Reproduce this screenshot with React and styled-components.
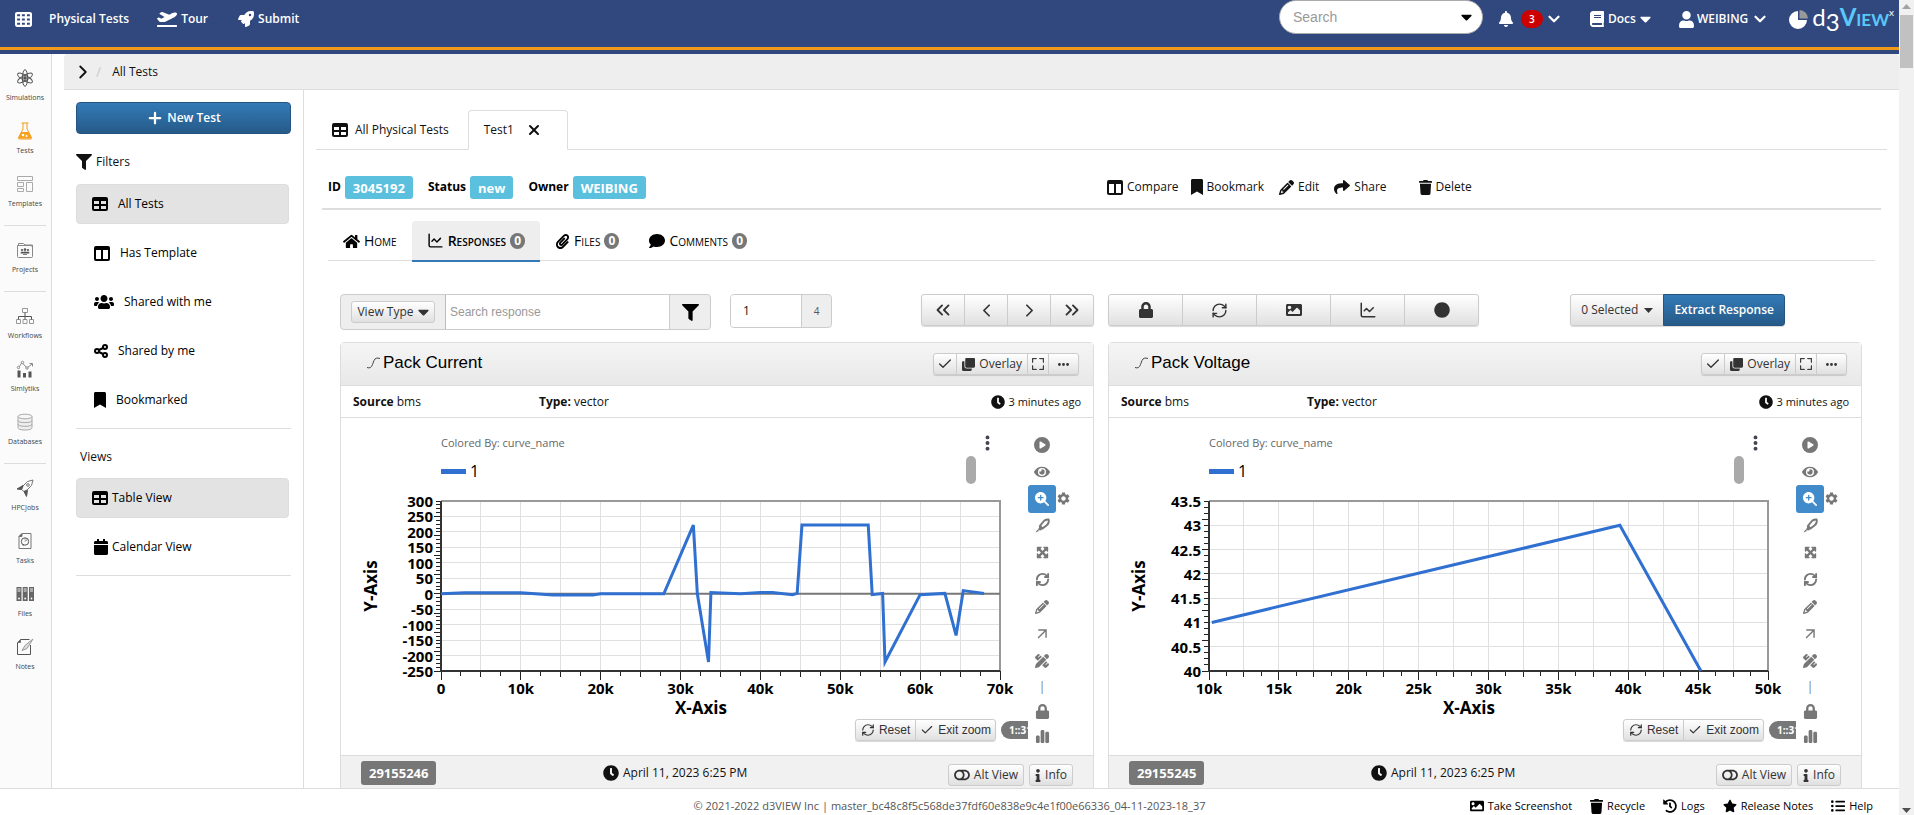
import React, { useState } from 'react';
import styled, { createGlobalStyle, css } from 'styled-components';
import * as FaIcons from 'react-icons/fa';
import * as Fa6Icons from 'react-icons/fa6';
import { MdArrowOutward, MdSettings } from 'react-icons/md';
import { BsFullscreen } from 'react-icons/bs';
import {
    ChevronDown, ChevronLeft, ChevronRight, ChevronsLeft, ChevronsRight,
    ChartLine, Check, RefreshCw, Plus, X
} from 'lucide-react';


const GlobalStyle = createGlobalStyle`
    * {
        box-sizing: border-box;
    }

    body {
        margin: 0;
        background: #fff;
        color: #111;
        font: 12px/18px 'Open Sans', 'Noto Sans', sans-serif;
    }

    button, input {
        font: inherit;
        color: inherit;
    }

    a {
        color: inherit;
        text-decoration: none;
    }

    svg {
        flex: none;
    }
`;

const Page = styled.div`
    display: flex;
    height: 100vh;
    overflow: hidden;
`;

const Screen = styled.div`
    flex: 1;
    min-width: 0;
    display: flex;
    flex-direction: column;
`;

/* ---- scrollbar ---- */

const ScrollTrack = styled.div`
    width: 15px;
    background: #f1f1f1;
    display: flex;
    flex-direction: column;
    align-items: center;
    justify-content: space-between;
    padding: 4px 0 2px;
`;

const ScrollThumb = styled.div`
    width: 13px;
    height: 53px;
    margin-top: 6px;
    background: #c1c1c1;
`;

const ScrollTop = styled.div`
    display: flex;
    flex-direction: column;
    align-items: center;
`;

/* ---- top bar ---- */

const TopBar = styled.header`
    flex: none;
    height: 50px;
    display: flex;
    align-items: flex-start;
    background: #31487e;
    border-bottom: 3px solid #f09a1a;
    color: #fff;
    font-weight: 600;
`;

const TopStrip = styled.div`
    flex: none;
    height: 4px;
    background: #31487e;
`;

const TopLink = styled.a`
    display: flex;
    align-items: center;
    gap: ${({$gap}) => $gap || 4}px;
    height: 38px;
    margin-left: ${({$left}) => $left || 30}px;
`;

const SearchPill = styled.div`
    width: 204px;
    height: 34px;
    margin-left: auto;
    padding: 0 10px 0 13px;
    display: flex;
    align-items: center;
    border: 1px solid #aaa;
    border-radius: 17px;
    background: #fff;
    color: #000;

    input {
        flex: 1;
        min-width: 0;
        padding: 0;
        border: 0;
        outline: 0;
        background: none;
        font: 14px 'Liberation Sans', Arial, sans-serif;
    }

    input::placeholder {
        color: #999;
    }
`;

const AlertCount = styled.span`
    min-width: 22px;
    height: 18px;
    margin-left: 6px;
    border-radius: 9px;
    background: #c00;
    font-size: 10px;
    text-align: center;
`;

const Logo = styled.a`
    display: flex;
    align-items: center;
    gap: 3px;
    height: 38px;
    margin: 0 5px 0 20px;
    font: 24px/38px Lato, sans-serif;
`;

const LogoThree = styled.span`
    vertical-align: -5px;
`;

const LogoView = styled.span`
    color: #5bc8fa;
    font-variant: small-caps;
    font-weight: 700;
`;

const LogoMark = styled.sup`
    font-size: 10px;
    line-height: 10px;
    vertical-align: 10px;
`;

/* ---- body ---- */

const Body = styled.div`
    flex: 1;
    min-height: 0;
    display: flex;
`;

const Rail = styled.nav`
    flex: none;
    width: 52px;
    background: #fbfbfb;
    border-right: 1px solid #ddd;
`;

const RailGroup = styled.div`
    display: flex;
    flex-direction: column;
    gap: 18px;
    margin: 0 5px 0 4px;
    padding: 15px 0;
    border-bottom: 1px solid #ddd;

    &:last-child {
        border-bottom: 0;
    }
`;

const RailLink = styled.a`
    display: flex;
    flex-direction: column;
    align-items: center;
    gap: 5px;
    font-size: 7px;
    line-height: 12px;
    color: #444;
`;

const Content = styled.div`
    flex: 1;
    min-width: 0;
    margin-left: 12px;
    display: flex;
    flex-direction: column;
`;

const Breadcrumb = styled.nav`
    flex: none;
    height: 36px;
    display: flex;
    align-items: center;
    padding-left: 8px;
    background: #eee;
    border-bottom: 1px solid #ddd;
    border-radius: 4px 4px 0 0;
`;

const Slash = styled.span`
    margin: 0 11px 0 2px;
    color: #ccc;
    font-size: 14px;
`;

const Columns = styled.div`
    flex: 1;
    min-height: 0;
    display: flex;
`;

const SidePanel = styled.aside`
    flex: none;
    width: 240px;
    padding: 12px 12px 0;
    border-right: 1px solid #ddd;
`;

const blueButton = css`
    border: 1px solid #245580;
    background: linear-gradient(#337ab7, #265a88);
    color: #fff;
    font-weight: 600;
`;

const greyButton = css`
    border: 1px solid #ccc;
    background: linear-gradient(#fff, #e0e0e0);
    color: #333;
`;

const NewTestButton = styled.button`
    ${blueButton}
    width: 100%;
    height: 32px;
    border-radius: 4px;
    display: flex;
    align-items: center;
    justify-content: center;
    gap: 3px;
`;

const SideTitle = styled.h2`
    display: flex;
    align-items: center;
    gap: 4px;
    margin: ${({$first}) => ($first ? '19px 0 13px' : '19px 4px 12px')};
    font-size: 12px;
    line-height: 18px;
    font-weight: 400;
`;

const SideList = styled.div`
    display: flex;
    flex-direction: column;
    gap: 9px;
    padding-bottom: 8px;
    border-bottom: 1px solid #ddd;
`;

const SideItem = styled.a`
    display: flex;
    align-items: center;
    gap: ${({$gap}) => $gap || 10}px;
    height: 40px;
    margin-right: 2px;
    padding-left: 17px;
    border: 1px solid transparent;
    border-radius: 4px;
    color: #000;

    ${({$active}) => $active && css`
        padding-left: 15px;
        border-color: #ddd;
        background: #e3e3e3;
    `}
`;

/* ---- main area ---- */

const Main = styled.main`
    flex: 1;
    min-width: 0;
    display: flex;
    flex-direction: column;
`;

const PageTabs = styled.div`
    flex: none;
    height: 40px;
    display: flex;
    margin: 20px 12px 0;
    padding-left: 16px;
    border-bottom: 1px solid #ddd;
`;

const PageTab = styled.a`
    display: flex;
    align-items: center;
    gap: 7px;
    padding-right: 19px;

    ${({$active}) => $active && css`
        gap: 12px;
        height: 40px;
        padding: 0 25px 0 15px;
        background: #fff;
        border: 1px solid #ddd;
        border-bottom-color: #fff;
        border-radius: 4px 4px 0 0;
    `}
`;

const halves = css`
    display: grid;
    grid-template-columns: minmax(0, 1fr) minmax(0, 1fr);
    column-gap: 14px;
`;

const TestInfo = styled.div`
    ${halves}
    flex: none;
    height: 60px;
    align-items: center;
    margin: 0 18px;
    padding: 16px 19px 0 6px;
    border-bottom: 2px solid #ddd;
`;

const InfoRow = styled.div`
    display: flex;
    align-items: center;
    padding-left: ${({$left}) => $left || 0}px;
`;

const InfoLabel = styled.span`
    margin-right: 4px;
    font-weight: 700;
    color: #000;
`;

const InfoBadge = styled.span`
    height: 23px;
    margin-right: 15px;
    padding: 0 8px;
    border-radius: 3px;
    background: #5bc0de;
    color: #fff;
    font-size: 13px;
    line-height: 24px;
    font-weight: 700;
`;

const ActionButton = styled.button`
    display: flex;
    align-items: center;
    gap: 4px;
    margin-right: ${({$right}) => $right || 15}px;
    padding: 0;
    border: 0;
    background: none;
`;

const SubTabs = styled.div`
    flex: none;
    height: 51px;
    display: flex;
    align-items: flex-end;
    margin: 0 24px;
    border-bottom: 1px solid #ddd;
`;

const SubTab = styled.a`
    display: flex;
    align-items: center;
    gap: 4px;
    height: 38px;
    padding: 0 15px;
    font-size: 14px;
    font-variant: small-caps;
    color: #000;

    ${({$active}) => $active && css`
        height: 41px;
        margin-bottom: -2px;
        border-bottom: 2px solid #337ab7;
        border-radius: 4px 4px 0 0;
        background: #eee;
        font-weight: 600;
    `}
`;

const Count = styled.span`
    min-width: 15px;
    height: 16px;
    border-radius: 8px;
    background: #777;
    color: #fff;
    font-size: 12px;
    line-height: 16px;
    font-weight: 700;
    text-align: center;
`;

const Toolbar = styled.div`
    ${halves}
    flex: none;
    margin: 33px 37px 12px 36px;
`;

const ToolSide = styled.div`
    display: flex;
    align-items: flex-start;
`;

const InputGroup = styled.div`
    display: flex;
    height: ${({$height}) => $height || 36}px;
    margin-right: 19px;
    border: 1px solid #ccc;
    border-radius: 4px;
    background: #eee;
    overflow: hidden;

    input {
        width: ${({$inputWidth}) => $inputWidth}px;
        padding: 0 ${({$pad}) => $pad || 4}px;
        border: 0;
        border-right: 1px solid #ccc;
        border-left: ${({$pad}) => ($pad ? 0 : '1px solid #bbb')};
        outline: 0;
        background: #fff;
    }

    input::placeholder {
        color: #999;
        font-family: 'Liberation Sans', Arial, sans-serif;
    }
`;

const Addon = styled.div`
    display: flex;
    align-items: center;
    justify-content: center;
    width: ${({$width}) => $width}px;
    font-size: ${({$small}) => ($small ? 10 : 12)}px;
    color: #555;
`;

const ButtonGroup = styled.div`
    display: flex;
    margin-left: ${({$push}) => ($push ? 'auto' : 0)};
    margin-right: ${({$right}) => $right || 0}px;
    border-radius: 3px;
    box-shadow: 0 1px 1px rgba(0, 0, 0, 0.15);

    > button {
        border-radius: 0;
    }

    > button + button {
        margin-left: -1px;
    }

    > button:first-child {
        border-top-left-radius: 3px;
        border-bottom-left-radius: 3px;
    }

    > button:last-child {
        border-top-right-radius: 3px;
        border-bottom-right-radius: 3px;
    }
`;

const ToolButton = styled.button`
    ${greyButton}
    display: flex;
    align-items: center;
    justify-content: center;
    gap: 6px;
    width: ${({$width}) => ($width ? `${$width}px` : 'auto')};
    height: 32px;
    padding: 0 10px;
`;

const ExtractButton = styled(ToolButton)`
    ${blueButton}
`;

const SmallButton = styled.button`
    ${greyButton}
    display: flex;
    align-items: center;
    gap: 4px;
    height: 22px;
    padding: 0 ${({$pad}) => $pad || 5}px;
    border-radius: 3px;
    font-family: ${({$arial}) => ($arial ? "'Liberation Sans', Arial, sans-serif" : 'inherit')};
    white-space: nowrap;
`;

/* ---- response cards ---- */

const Cards = styled.div`
    ${halves}
    flex: 1;
    min-height: 0;
    overflow: hidden;
    margin: 0 37px 0 36px;
`;

const Card = styled.section`
    border: 1px solid #ddd;
    border-radius: 4px 4px 0 0;
    height: max-content;
`;

const CardHead = styled.div`
    height: 43px;
    display: flex;
    align-items: center;
    justify-content: space-between;
    padding: 0 14px 0 26px;
    border-bottom: 1px solid #ddd;
    background: linear-gradient(#f5f5f5, #e8e8e8);
`;

const CardTitle = styled.h3`
    display: flex;
    align-items: center;
    gap: 3px;
    margin: 0 0 3px;
    font: 17px/20px 'Liberation Sans', Arial, sans-serif;
    color: #000;
`;

const CardMeta = styled.div`
    height: 32px;
    display: grid;
    grid-template-columns: 186px 1fr auto;
    align-items: center;
    padding: 0 12px;
    border-bottom: 1px solid #ddd;
`;

const IconText = styled.span`
    display: flex;
    align-items: center;
    gap: 4px;
    font-size: ${({$small}) => ($small ? 11 : 12)}px;
`;

const CardBody = styled.div`
    display: flex;
`;

const ChartArea = styled.div`
    flex: 1;
    min-width: 0;
    padding-bottom: 14px;
`;

const ChartTop = styled.div`
    display: flex;
    justify-content: space-between;
    height: 72px;
    padding: 16px 38px 0 100px;
`;

const Legend = styled.div`
    font-size: 11px;
    color: #666;
`;

const LegendKey = styled.div`
    display: flex;
    align-items: center;
    gap: 4px;
    margin-top: 9px;
    font-size: 16px;
    line-height: 20px;
    color: #000;

    i {
        width: 25px;
        height: 5px;
        background: #3070d0;
    }
`;

const LegendScroll = styled.div`
    display: flex;
    align-items: flex-start;
    gap: 9px;

    i {
        width: 10px;
        height: 28px;
        margin-top: 22px;
        border-radius: 5px;
        background: #aaa;
    }
`;

const ChartSvg = styled.svg`
    display: block;
    width: 100%;
    height: auto;
    font-family: 'Open Sans', 'Noto Sans', sans-serif;
    font-size: 15px;
    font-weight: 700;
`;

const AxisTitle = styled.text`
    font-size: 17px;
`;

const ZoomRow = styled.div`
    display: flex;
    align-items: center;
    justify-content: flex-end;
    gap: 5px;
`;

const RangeClip = styled.div`
    width: 27px;
    overflow: hidden;
`;

const RangePill = styled.div`
    width: 54px;
    height: 18px;
    padding-left: 8px;
    border-radius: 9px;
    background: #777;
    color: #fff;
    font-size: 10px;
    font-weight: 700;
`;

const ChartTools = styled.div`
    flex: none;
    width: 65px;
    display: flex;
    flex-direction: column;
    padding-top: 13px;
    color: #777;
`;

const ToolLine = styled.div`
    display: flex;
    align-items: center;
    height: ${({$tight}) => ($tight ? 25 : 27)}px;
`;

const ChartTool = styled.button`
    display: flex;
    align-items: center;
    justify-content: center;
    width: 28px;
    height: ${({$active}) => ($active ? 28 : 25)}px;
    padding: 0;
    border: 0;
    border-radius: 3px;
    background: ${({$active}) => ($active ? '#428bca' : 'none')};
    color: ${({$active}) => ($active ? '#fff' : '#777')};
`;

const CardFoot = styled.div`
    height: 40px;
    display: grid;
    grid-template-columns: 242px 1fr auto;
    align-items: start;
    padding: 5px 20px 0;
    border-top: 1px solid #ddd;
    background: #f1f1f1;
`;

const IdBadge = styled(InfoBadge)`
    height: 24px;
    justify-self: start;
    background: #777;
`;

const FootButtons = styled.div`
    display: flex;
    gap: 5px;
    margin-top: 3px;
`;

const FootDate = styled(IconText)`
    height: 24px;
`;

const Footer = styled.footer`
    flex: none;
    height: 27px;
    display: grid;
    grid-template-columns: 1fr auto 1fr;
    align-items: center;
    padding-top: 8px;
    border-top: 1px solid #ddd;
    font-size: 11px;
    color: #555;
`;

const FooterLinks = styled.div`
    display: flex;
    justify-content: flex-end;
    gap: 18px;
    padding-right: 26px;
    color: #000;
`;


/* ---- icons that are not square ---- */

const sized = (Icon, width, height) => styled(Icon)`
    width: ${width}px;
    height: ${height}px;
`;

const PlaneIcon = sized(FaIcons.FaPlaneDeparture, 20, 16);
const BellIcon = sized(FaIcons.FaBell, 14, 16);
const BookIcon = sized(FaIcons.FaBook, 14, 16);
const UserIcon = sized(FaIcons.FaUser, 15, 17);
const UsersIcon = sized(FaIcons.FaUsers, 20, 16);
const CaretIcon = sized(FaIcons.FaCaretDown, 11, 18);
const BookmarkIcon = sized(FaIcons.FaBookmark, 12, 16);
const CalendarIcon = sized(FaIcons.FaCalendar, 14, 16);
const TrashIcon = sized(FaIcons.FaTrash, 13, 15);
const InfoIcon = sized(FaIcons.FaInfo, 6, 13);
const ToggleIcon = sized(FaIcons.FaToggleOff, 16, 14);
const DotsIcon = sized(Fa6Icons.FaEllipsisVertical, 5, 18);

/* ---- drawn icons ---- */

const RailSvg = ({ children, color = '#777' }) => (
    <svg width="18" height="18" viewBox="0 0 18 18" fill="none" stroke={color} strokeWidth="1">
        {children}
    </svg>
);

const AtomIcon = () => (
    <RailSvg color="#555">
        <ellipse cx="9" cy="9" rx="2.6" ry="8.3" />
        <ellipse cx="9" cy="9" rx="2.6" ry="8.3" transform="rotate(60 9 9)" />
        <ellipse cx="9" cy="9" rx="2.6" ry="8.3" transform="rotate(120 9 9)" />
        <circle cx="9" cy="9" r="1.3" fill="#555" />
    </RailSvg>
);

const FlaskIcon = () => (
    <RailSvg color="#f59a1c">
        <path d="M5.5 1h7M7 1v6L2.5 15.5q-.5 1.5 1 1.5h11q1.5 0 1-1.5L11 7V1" />
        <path d="M5.5 10.5h7l2.5 5.5H3z" fill="#f9a51a" />
        <circle cx="7" cy="13" r="1.2" fill="#fff" stroke="none" />
        <circle cx="10.5" cy="14" r="1" fill="#fff" stroke="none" />
    </RailSvg>
);

const TemplateIcon = () => (
    <RailSvg color="#aaa">
        <path d="M1.5 1.5h15v4h-15zM1.5 7.5h6v4h-6zM1.5 13.5h6v3h-6zM10.5 7.5h6v9h-6z" />
    </RailSvg>
);

const ProjectIcon = () => (
    <RailSvg color="#888">
        <path d="M2.5 4V2.5h5L9 4h7.5v3M1.5 4.5h14l1 2v9q0 1-1 1h-13q-1 0-1-1z" />
        <g fill="#555" stroke="none">
            <circle cx="6" cy="9" r="1.1" /><circle cx="9" cy="8.6" r="1.3" /><circle cx="12" cy="9" r="1.1" />
            <path d="M4.5 12.5q0-2 1.5-2 1 0 1 .6.5-.6 2-.6t2 .6q0-.6 1-.6 1.5 0 1.5 2zM7 13h4v.8H7z" />
        </g>
    </RailSvg>
);

const WorkflowIcon = () => (
    <RailSvg color="#999">
        <path d="M6.5 1.5h5v4h-5zM.5 12.5h4v4h-4zM7 12.5h4v4H7zM13.5 12.5h4v4h-4z" />
        <path d="M9 5.5v7M2.5 12.5v-3h13v3" stroke="#555" />
    </RailSvg>
);

const SimlytiksIcon = () => (
    <RailSvg color="#888">
        <path d="M3 7l3-4.5L11 8l5-4M13.5 3.5h3v3" />
        <circle cx="2.5" cy="7.5" r="1.2" fill="#fff" /><circle cx="6.5" cy="2.5" r="1.2" fill="#fff" />
        <circle cx="11" cy="8" r="1.2" fill="#fff" />
        <path d="M1.5 10.5h3v7h-3zM7 13h3v4.5H7zM12.5 11.5h3v6h-3z" fill="#555" stroke="none" />
    </RailSvg>
);

const DatabaseIcon = () => (
    <RailSvg color="#aaa">
        <path d="M2 3.5v11q0 2.5 7 2.5t7-2.5v-11z" fill="#eee" />
        <ellipse cx="9" cy="3.5" rx="7" ry="2.3" fill="#f6f6f6" />
        <path d="M2 7.3q0 2.3 7 2.3t7-2.3M2 11q0 2.3 7 2.3T16 11" />
    </RailSvg>
);

const JobsIcon = () => (
    <RailSvg>
        <path d="M17 1q-6 0-10 6l-1.5 3.5L8 12.5l3-1.5q6-4 6-10z" />
        <circle cx="12" cy="6" r="1.3" />
        <path d="M7 6.5L1 10l4.5.5zM11.5 11.5L10.5 17.5 8 12.5z" fill="#555" stroke="#555" />
    </RailSvg>
);

const TaskIcon = () => (
    <RailSvg>
        <path d="M6 1.5h9v15H3v-12z" /><path d="M3 4.5L6 1.5v3z" fill="#555" />
        <circle cx="9" cy="9.5" r="3.7" stroke="#555" />
        <path d="M9 9.5l2-2M9 6.5v1M6.5 13h1.5" stroke="#555" />
    </RailSvg>
);

const BinderIcon = () => (
    <RailSvg>
        <path d="M.5 2h5v14h-5zM6.7 2h5v14h-5zM13 2h5v14h-5z" fill="#666" stroke="none" />
        <path d="M1.5 4h3M1.5 6h3M7.7 4h3M7.7 6h3M14 4h3M14 6h3" stroke="#eee" />
        <g fill="#fff" stroke="none">
            <circle cx="3" cy="13.5" r=".9" /><circle cx="9.2" cy="13.5" r=".9" /><circle cx="15.5" cy="13.5" r=".9" />
        </g>
    </RailSvg>
);

const NoteIcon = () => (
    <RailSvg>
        <path d="M14.5 7v9.5h-13v-12l3-3h9" stroke="#555" /><path d="M1.5 4.5l3-3v3z" fill="#555" />
        <path d="M17 1L9 7.5 6 12.5l5-2z" fill="#ddd" stroke="#999" />
    </RailSvg>
);

const PieIcon = () => (
    <svg width="20" height="20" viewBox="0 0 20 20">
        <path d="M9 2v9h9A9 9 0 1 1 9 2z" fill="#fff" />
        <path d="M10.5 1A9 9 0 0 1 19 9.5h-8.5z" fill="#999" />
    </svg>
);

const CurveIcon = () => (
    <svg width="13" height="12" viewBox="0 0 13 12" fill="none" stroke="#444">
        <path d="M0 10.5q4 1.5 5.5-3L7 3.5Q8.5 0 13 1.5" />
    </svg>
);

const SplitIcon = () => (
    <svg width="16" height="15" viewBox="0 0 16 15" fill="none" stroke="currentColor">
        <rect x="1" y="1" width="14" height="13" rx="1" strokeWidth="2" />
        <path d="M1 2.5h14" strokeWidth="3" /><path d="M8 2v12" strokeWidth="2" />
    </svg>
);

const GridIcon = () => (
    <svg width="16" height="14" viewBox="0 0 16 14" fill="none" stroke="currentColor" strokeWidth="2">
        <rect x="1" y="1" width="14" height="12" rx="1" />
        <path d="M1 2.5h14" strokeWidth="3" /><path d="M8 2v11M1 8h14" />
    </svg>
);

const ShareIcon = () => (
    <svg width="14" height="14" viewBox="0 0 14 14" fill="none" stroke="currentColor" strokeWidth="2">
        <circle cx="3" cy="7" r="2" /><circle cx="11" cy="3" r="2" /><circle cx="11" cy="11" r="2" />
        <path d="M5 6l4-2M5 8l4 2" />
    </svg>
);

const MarkerIcon = () => (
    <svg width="15" height="15" viewBox="0 0 15 15" fill="none" stroke="currentColor" strokeWidth="2">
        <path d="M13.5 1.5q-3-.5-5 2L5 8l2.5 2.5L12 7q2.5-2.5 1.5-5.5z" />
        <path d="M4.5 8l3 3-2 1.5-2.5-.5zM.5 14.5l2-3L4 13z" fill="currentColor" stroke="none" />
    </svg>
);

const Triangle = ({ up, color = '#505050' }) => (
    <svg width="9" height="5" viewBox="0 0 9 5" fill={color}>
        <path d={up ? 'M0 5L4.5 0 9 5z' : 'M0 0L4.5 5 9 0z'} />
    </svg>
);


/* ---- data ---- */

const RailData = [
    [['Simulations', AtomIcon], ['Tests', FlaskIcon], ['Templates', TemplateIcon]],
    [['Projects', ProjectIcon]],
    [['Workflows', WorkflowIcon], ['Simlytiks', SimlytiksIcon], ['Databases', DatabaseIcon]],
    [['HPCJobs', JobsIcon], ['Tasks', TaskIcon], ['Files', BinderIcon], ['Notes', NoteIcon]],
];

const FilterData = [
    { title: 'All Tests', icon: <GridIcon /> },
    { title: 'Has Template', icon: <SplitIcon /> },
    { title: 'Shared with me', icon: <UsersIcon /> },
    { title: 'Shared by me', icon: <ShareIcon /> },
    { title: 'Bookmarked', icon: <BookmarkIcon /> },
];

const ResponseData = [
    {
        id: '29155246',
        title: 'Pack Current',
        x: { min: 0, max: 70, label: 10, grid: 5, tick: 2.5, mid: 5 },
        y: { min: -250, max: 300, label: 50, tick: 12.5 },
        zero: true,
        points: [
            [0, 0], [3, 3], [10, 3], [14, -4], [19, -4], [20, 0], [27.9, 0], [31.6, 222], [32.1, 0],
            [33.5, -221], [33.8, 4], [37.5, 0], [40, 4], [41.5, 4], [44, -3], [44.6, 1], [45.2, 222],
            [53.5, 222], [54, -3], [55.3, 1], [55.6, -221], [60, -3], [63.1, 1], [64.5, -135],
            [65.4, 10], [68, 1],
        ],
    },
    {
        id: '29155245',
        title: 'Pack Voltage',
        x: { min: 10, max: 50, label: 5, grid: 2.5, tick: 1.25, mid: 2.5 },
        y: { min: 40, max: 43.5, label: 0.5, tick: 0.125 },
        points: [[10.2, 41], [39.4, 43], [45.2, 40]],
    },
];

const ToolData = [
    <Fa6Icons.FaCirclePlay size={16} />,
    <FaIcons.FaEye size={16} />,
    <Fa6Icons.FaMagnifyingGlassPlus size={14} />,
    <MarkerIcon />,
    <Fa6Icons.FaMaximize size={13} />,
    <RefreshCw size={15} strokeWidth={3} />,
    <Fa6Icons.FaPencil size={14} />,
    <MdArrowOutward size={17} />,
    <Fa6Icons.FaPenRuler size={14} />,
    '|',
    <FaIcons.FaLock size={15} />,
    <Fa6Icons.FaChartSimple size={15} />,
];

const steps = (min, max, step) => {
    const list = [];
    for (let i = 0; min + i * step <= max + step / 1000; i++) {
        list.push(min + i * step);
    }
    return list;
};

const LEFT = 100;
const RIGHT = 659;
const TOP = 11;
const BOTTOM = 181;

function Chart({ x, y, zero, points, title }) {
    const px = (v) => LEFT + ((v - x.min) / (x.max - x.min)) * (RIGHT - LEFT);
    const py = (v) => BOTTOM - ((v - y.min) / (y.max - y.min)) * (BOTTOM - TOP);
    const tickLength = (v) => {
        if (v % x.label === 0) return 9;
        return v % x.mid === 0 ? 6 : 5;
    };

    return (
        <ChartSvg viewBox="0 0 687 229" role="img" aria-label={title}>
            <g stroke="#e0e0e0" shapeRendering="crispEdges">
                {steps(x.min, x.max, x.grid).map((v) => <line key={v} x1={px(v)} x2={px(v)} y1={TOP} y2={BOTTOM} />)}
                {steps(y.min, y.max, y.label).map((v) => <line key={v} x1={LEFT} x2={RIGHT} y1={py(v)} y2={py(v)} />)}
            </g>
            <path d={`M${LEFT} ${TOP}H${RIGHT}V${BOTTOM}`} fill="none" stroke="#999" strokeWidth="2" />
            {zero && <path d={`M${LEFT} ${py(0)}H${RIGHT}`} stroke="#777" strokeWidth="2" />}
            <g stroke="#222" shapeRendering="crispEdges">
                {steps(x.min, x.max, x.tick).map((v) => (
                    <line key={v} x1={px(v)} x2={px(v)} y1={BOTTOM} y2={BOTTOM + tickLength(v)} />
                ))}
                {steps(y.min, y.max, y.tick).map((v, i) => (
                    <line key={v} x1={i % 5 === 0 ? LEFT - 7 : LEFT - 5} x2={LEFT} y1={py(v)} y2={py(v)} />
                ))}
            </g>
            <path d={`M${LEFT} ${TOP}V${BOTTOM}H${RIGHT}`} fill="none" stroke="#333" strokeWidth="2" />
            <polyline
                points={points.map(([a, b]) => `${px(a)},${py(b)}`).join(' ')}
                fill="none"
                stroke="#3070d0"
                strokeWidth="3"
            />
            {steps(x.min, x.max, x.label).map((v) => (
                <text key={v} x={px(v)} y="204" textAnchor="middle">{v === 0 ? '0' : `${v}k`}</text>
            ))}
            {steps(y.min, y.max, y.label).map((v) => (
                <text key={v} x={LEFT - 8} y={py(v) + 6} textAnchor="end">{v}</text>
            ))}
            <AxisTitle x="360" y="224" textAnchor="middle">X-Axis</AxisTitle>
            <AxisTitle transform="translate(36 96) rotate(-90)" textAnchor="middle">Y-Axis</AxisTitle>
        </ChartSvg>
    );
}

function ResponseCard({ item }) {
    return (
        <Card>
            <CardHead>
                <CardTitle><CurveIcon />{item.title}</CardTitle>
                <ButtonGroup>
                    <SmallButton aria-label="Select" $pad={3}><Check size={16} /></SmallButton>
                    <SmallButton><FaIcons.FaClone size={13} />Overlay</SmallButton>
                    <SmallButton aria-label="Fullscreen" $pad={4}><BsFullscreen size={12} strokeWidth={1} /></SmallButton>
                    <SmallButton aria-label="More" $pad={8}><Fa6Icons.FaEllipsis size={13} /></SmallButton>
                </ButtonGroup>
            </CardHead>
            <CardMeta>
                <span><b>Source</b> bms</span>
                <span><b>Type:</b> vector</span>
                <IconText $small><FaIcons.FaClock size={14} />3 minutes ago</IconText>
            </CardMeta>
            <CardBody>
                <ChartArea>
                    <ChartTop>
                        <Legend>
                            Colored By: curve_name
                            <LegendKey><i />1</LegendKey>
                        </Legend>
                        <LegendScroll>
                            <i />
                            <DotsIcon color="#445" />
                        </LegendScroll>
                    </ChartTop>
                    <Chart {...item} />
                    <ZoomRow>
                        <ButtonGroup>
                            <SmallButton $arial><RefreshCw size={14} />Reset</SmallButton>
                            <SmallButton $arial $pad={4}><Check size={14} />Exit zoom</SmallButton>
                        </ButtonGroup>
                        <RangeClip><RangePill>1::31</RangePill></RangeClip>
                    </ZoomRow>
                </ChartArea>
                <ChartTools>
                    {ToolData.map((icon, index) => (
                        <ToolLine key={index} $tight={index >= 9}>
                            <ChartTool $active={index === 2} aria-label={`Chart tool ${index + 1}`}>{icon}</ChartTool>
                            {index === 2 && <MdSettings size={15} />}
                        </ToolLine>
                    ))}
                </ChartTools>
            </CardBody>
            <CardFoot>
                <IdBadge>{item.id}</IdBadge>
                <FootDate><FaIcons.FaClock size={16} />April 11, 2023 6:25 PM</FootDate>
                <FootButtons>
                    <SmallButton><ToggleIcon />Alt View</SmallButton>
                    <SmallButton><InfoIcon />Info</SmallButton>
                </FootButtons>
            </CardFoot>
        </Card>
    );
}

function App() {
    const [filter, setFilter] = useState('All Tests');
    const [page, setPage] = useState('1');

    return (
        <Page>
            <GlobalStyle />
            <Screen>
                <TopBar>
                    <TopLink href="#apps" $left={15} aria-label="Apps"><Fa6Icons.FaTableCells size={17} /></TopLink>
                    <TopLink href="#tests" $left={17}>Physical Tests</TopLink>
                    <TopLink href="#tour" $left={28}><PlaneIcon />Tour</TopLink>
                    <TopLink href="#submit"><FaIcons.FaRocket size={16} />Submit</TopLink>
                    <SearchPill>
                        <input type="text" placeholder="Search" aria-label="Search" />
                        <CaretIcon />
                    </SearchPill>
                    <TopLink href="#alerts" $left={16} $gap={2}>
                        <BellIcon />
                        <AlertCount>3</AlertCount>
                        <ChevronDown size={18} strokeWidth={3} />
                    </TopLink>
                    <TopLink href="#docs" $left={27}>
                        <BookIcon />Docs<CaretIcon />
                    </TopLink>
                    <TopLink href="#user" $left={28} $gap={3}>
                        <UserIcon />WEIBING<ChevronDown size={18} strokeWidth={3} />
                    </TopLink>
                    <Logo href="#home">
                        <PieIcon />
                        <span>d<LogoThree>3</LogoThree><LogoView>View</LogoView><LogoMark>x</LogoMark></span>
                    </Logo>
                </TopBar>
                <TopStrip />
                <Body>
                    <Rail>
                        {RailData.map((group, index) => (
                            <RailGroup key={index}>
                                {group.map(([name, Icon]) => (
                                    <RailLink href={`#${name}`} key={name}><Icon />{name}</RailLink>
                                ))}
                            </RailGroup>
                        ))}
                    </Rail>
                    <Content>
                        <Breadcrumb>
                            <ChevronRight size={22} />
                            <Slash>/</Slash>
                            All Tests
                        </Breadcrumb>
                        <Columns>
                            <SidePanel>
                                <NewTestButton><Plus size={18} strokeWidth={3} />New Test</NewTestButton>
                                <SideTitle $first><FaIcons.FaFilter size={16} />Filters</SideTitle>
                                <SideList>
                                    {FilterData.map((item) => (
                                        <SideItem
                                            href="#filter"
                                            key={item.title}
                                            $active={item.title === filter}
                                            onClick={() => setFilter(item.title)}
                                        >
                                            {item.icon}
                                            {item.title}
                                        </SideItem>
                                    ))}
                                </SideList>
                                <SideTitle>Views</SideTitle>
                                <SideList>
                                    <SideItem href="#table" $active $gap={4}><GridIcon />Table View</SideItem>
                                    <SideItem href="#calendar" $gap={4}><CalendarIcon />Calendar View</SideItem>
                                </SideList>
                            </SidePanel>
                            <Main>
                                <PageTabs>
                                    <PageTab href="#all"><GridIcon />All Physical Tests</PageTab>
                                    <PageTab href="#test1" $active>Test1<X size={16} strokeWidth={3} /></PageTab>
                                </PageTabs>
                                <TestInfo>
                                    <InfoRow>
                                        <InfoLabel>ID</InfoLabel><InfoBadge>3045192</InfoBadge>
                                        <InfoLabel>Status</InfoLabel><InfoBadge>new</InfoBadge>
                                        <InfoLabel>Owner</InfoLabel><InfoBadge>WEIBING</InfoBadge>
                                    </InfoRow>
                                    <InfoRow $left={5}>
                                        <ActionButton $right={12}><SplitIcon />Compare</ActionButton>
                                        <ActionButton><BookmarkIcon />Bookmark</ActionButton>
                                        <ActionButton><Fa6Icons.FaPencil size={15} />Edit</ActionButton>
                                        <ActionButton $right={32}><FaIcons.FaShare size={16} />Share</ActionButton>
                                        <ActionButton><TrashIcon />Delete</ActionButton>
                                    </InfoRow>
                                </TestInfo>
                                <SubTabs>
                                    <SubTab href="#home"><FaIcons.FaHome size={17} />Home</SubTab>
                                    <SubTab href="#responses" $active>
                                        <ChartLine size={17} />Responses<Count>0</Count>
                                    </SubTab>
                                    <SubTab href="#files"><FaIcons.FaPaperclip size={15} />Files<Count>0</Count></SubTab>
                                    <SubTab href="#comments"><FaIcons.FaComment size={16} />Comments<Count>0</Count></SubTab>
                                </SubTabs>
                                <Toolbar>
                                    <ToolSide>
                                        <InputGroup $inputWidth={225}>
                                            <Addon $width={104}>
                                                <SmallButton>View Type<CaretIcon /></SmallButton>
                                            </Addon>
                                            <input type="text" placeholder="Search response" aria-label="Search response" />
                                            <Addon $width={40}><FaIcons.FaFilter size={17} color="#000" /></Addon>
                                        </InputGroup>
                                        <InputGroup $inputWidth={71} $height={34} $pad={12}>
                                            <input
                                                type="text"
                                                aria-label="Page"
                                                value={page}
                                                onChange={(e) => setPage(e.target.value)}
                                            />
                                            <Addon $width={29} $small>4</Addon>
                                        </InputGroup>
                                        <ButtonGroup $push>
                                            <ToolButton $width={44} aria-label="First"><ChevronsLeft size={22} /></ToolButton>
                                            <ToolButton $width={44} aria-label="Previous"><ChevronLeft size={21} /></ToolButton>
                                            <ToolButton $width={44} aria-label="Next"><ChevronRight size={21} /></ToolButton>
                                            <ToolButton $width={44} aria-label="Last"><ChevronsRight size={22} /></ToolButton>
                                        </ButtonGroup>
                                    </ToolSide>
                                    <ToolSide>
                                        <ButtonGroup>
                                            <ToolButton $width={75} aria-label="Lock"><FaIcons.FaLock size={16} /></ToolButton>
                                            <ToolButton $width={75} aria-label="Refresh"><RefreshCw size={17} /></ToolButton>
                                            <ToolButton $width={75} aria-label="Image"><FaIcons.FaImage size={16} /></ToolButton>
                                            <ToolButton $width={75} aria-label="Chart"><ChartLine size={18} /></ToolButton>
                                            <ToolButton $width={75} aria-label="Record"><FaIcons.FaCircle size={16} /></ToolButton>
                                        </ButtonGroup>
                                        <ButtonGroup $push $right={77}>
                                            <ToolButton>0 Selected<Triangle color="#333" /></ToolButton>
                                            <ExtractButton>Extract Response</ExtractButton>
                                        </ButtonGroup>
                                    </ToolSide>
                                </Toolbar>
                                <Cards>
                                    {ResponseData.map((item) => <ResponseCard item={item} key={item.id} />)}
                                </Cards>
                            </Main>
                        </Columns>
                    </Content>
                </Body>
                <Footer>
                    <span />
                    <span>© 2021-2022 d3VIEW Inc | master_bc48c8f5c568de37fdf60e838e9c4e1f00e66336_04-11-2023-18_37</span>
                    <FooterLinks>
                        <IconText as="a" href="#shot" $small><FaIcons.FaImage size={14} />Take Screenshot</IconText>
                        <IconText as="a" href="#recycle" $small><TrashIcon />Recycle</IconText>
                        <IconText as="a" href="#logs" $small><FaIcons.FaHistory size={14} />Logs</IconText>
                        <IconText as="a" href="#notes" $small><FaIcons.FaStar size={14} />Release Notes</IconText>
                        <IconText as="a" href="#help" $small><FaIcons.FaListUl size={14} />Help</IconText>
                    </FooterLinks>
                </Footer>
            </Screen>
            <ScrollTrack>
                <ScrollTop>
                    <Triangle up color="#a3a3a3" />
                    <ScrollThumb />
                </ScrollTop>
                <Triangle />
            </ScrollTrack>
        </Page>
    );
}

export default App;
